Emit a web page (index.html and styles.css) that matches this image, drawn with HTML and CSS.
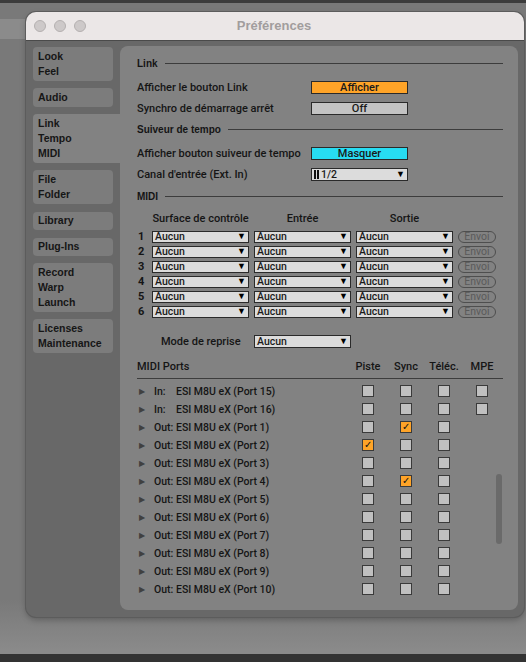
FILE: index.html
```html
<!DOCTYPE html>
<html lang="fr">
<head>
<meta charset="utf-8">
<title>Préférences</title>
<link rel="stylesheet" href="styles.css">
</head>
<body>
<div class="desktop">
  <div class="topstrip"></div>
  <div class="bgband"></div>
  <div class="window">
    <div class="titlebar">
      <div class="lights"><span class="light"></span><span class="light"></span><span class="light"></span></div>
      <div class="title">Préférences</div>
    </div>
    <div class="wbody">
      <div class="sidebar">
        <div class="tab tab2"><span>Look</span><span>Feel</span></div>
        <div class="tab tab1"><span>Audio</span></div>
        <div class="tab tab3 sel"><span>Link</span><span>Tempo</span><span>MIDI</span></div>
        <div class="tab tab2"><span>File</span><span>Folder</span></div>
        <div class="tab tab1"><span>Library</span></div>
        <div class="tab tab1"><span>Plug-Ins</span></div>
        <div class="tab tab3"><span>Record</span><span>Warp</span><span>Launch</span></div>
        <div class="tab tab2"><span>Licenses</span><span>Maintenance</span></div>
      </div>
      <div class="panel">
        <div class="sect s-link"><span>Link</span><i></i></div>
        <div class="row r1"><span class="lbl">Afficher le bouton Link</span><span class="btn orange">Afficher</span></div>
        <div class="row r2"><span class="lbl">Synchro de démarrage arrêt</span><span class="btn gray">Off</span></div>
        <div class="sect s-tempo"><span>Suiveur de tempo</span><i></i></div>
        <div class="row r3"><span class="lbl">Afficher bouton suiveur de tempo</span><span class="btn cyan">Masquer</span></div>
        <div class="row r4"><span class="lbl">Canal d'entrée (Ext. In)</span><span class="dd"><span class="bars"></span>1/2<b>▼</b></span></div>
        <div class="sect s-midi"><span>MIDI</span><i></i></div>
        <div class="mgrid">
          <span></span><span class="ch">Surface de contrôle</span><span class="ch">Entrée</span><span class="ch">Sortie</span><span></span>
          <span class="num">1</span><span class="dd">Aucun<b>▼</b></span><span class="dd">Aucun<b>▼</b></span><span class="dd">Aucun<b>▼</b></span><span class="pill">Envoi</span>
          <span class="num">2</span><span class="dd">Aucun<b>▼</b></span><span class="dd">Aucun<b>▼</b></span><span class="dd">Aucun<b>▼</b></span><span class="pill">Envoi</span>
          <span class="num">3</span><span class="dd">Aucun<b>▼</b></span><span class="dd">Aucun<b>▼</b></span><span class="dd">Aucun<b>▼</b></span><span class="pill">Envoi</span>
          <span class="num">4</span><span class="dd">Aucun<b>▼</b></span><span class="dd">Aucun<b>▼</b></span><span class="dd">Aucun<b>▼</b></span><span class="pill">Envoi</span>
          <span class="num">5</span><span class="dd">Aucun<b>▼</b></span><span class="dd">Aucun<b>▼</b></span><span class="dd">Aucun<b>▼</b></span><span class="pill">Envoi</span>
          <span class="num">6</span><span class="dd">Aucun<b>▼</b></span><span class="dd">Aucun<b>▼</b></span><span class="dd">Aucun<b>▼</b></span><span class="pill">Envoi</span>
        </div>
        <div class="mode"><span class="lbl">Mode de reprise</span><span class="dd">Aucun<b>▼</b></span></div>
        <div class="phead"><span class="ptitle">MIDI Ports</span><span>Piste</span><span>Sync</span><span>Téléc.</span><span>MPE</span></div>
        <div class="ports">
          <div class="plist">
            <div class="prow"><span class="pname"><span class="tri">▶</span><span class="io">In:</span>ESI M8U eX (Port 15)</span><span class="cb"></span><span class="cb"></span><span class="cb"></span><span class="cb"></span></div>
            <div class="prow"><span class="pname"><span class="tri">▶</span><span class="io">In:</span>ESI M8U eX (Port 16)</span><span class="cb"></span><span class="cb"></span><span class="cb"></span><span class="cb"></span></div>
            <div class="prow"><span class="pname"><span class="tri">▶</span>Out: ESI M8U eX (Port 1)</span><span class="cb"></span><span class="cb on">✓</span><span class="cb"></span><span></span></div>
            <div class="prow"><span class="pname"><span class="tri">▶</span>Out: ESI M8U eX (Port 2)</span><span class="cb on">✓</span><span class="cb"></span><span class="cb"></span><span></span></div>
            <div class="prow"><span class="pname"><span class="tri">▶</span>Out: ESI M8U eX (Port 3)</span><span class="cb"></span><span class="cb"></span><span class="cb"></span><span></span></div>
            <div class="prow"><span class="pname"><span class="tri">▶</span>Out: ESI M8U eX (Port 4)</span><span class="cb"></span><span class="cb on">✓</span><span class="cb"></span><span></span></div>
            <div class="prow"><span class="pname"><span class="tri">▶</span>Out: ESI M8U eX (Port 5)</span><span class="cb"></span><span class="cb"></span><span class="cb"></span><span></span></div>
            <div class="prow"><span class="pname"><span class="tri">▶</span>Out: ESI M8U eX (Port 6)</span><span class="cb"></span><span class="cb"></span><span class="cb"></span><span></span></div>
            <div class="prow"><span class="pname"><span class="tri">▶</span>Out: ESI M8U eX (Port 7)</span><span class="cb"></span><span class="cb"></span><span class="cb"></span><span></span></div>
            <div class="prow"><span class="pname"><span class="tri">▶</span>Out: ESI M8U eX (Port 8)</span><span class="cb"></span><span class="cb"></span><span class="cb"></span><span></span></div>
            <div class="prow"><span class="pname"><span class="tri">▶</span>Out: ESI M8U eX (Port 9)</span><span class="cb"></span><span class="cb"></span><span class="cb"></span><span></span></div>
            <div class="prow"><span class="pname"><span class="tri">▶</span>Out: ESI M8U eX (Port 10)</span><span class="cb"></span><span class="cb"></span><span class="cb"></span><span></span></div>
          </div>
          <div class="scroll"></div>
        </div>
      </div>
    </div>
  </div>
  <div class="bottombar"></div>
</div>
</body>
</html>
```
FILE: styles.css
```css
* { box-sizing: border-box; }
html, body { margin: 0; padding: 0; }
body {
  font-family: "Liberation Sans", Arial, sans-serif;
  background: #7a7a7a;
}
.desktop {
  position: relative;
  width: 526px;
  height: 662px;
  overflow: hidden;
  background: linear-gradient(#797979 0, #797979 600px, #8a8a8a 650px);
  display: flex;
  flex-direction: column;
}
.topstrip { height: 3px; background: #3c3c3c; flex: none; }
.bgband {
  position: absolute;
  left: 0; top: 19px;
  width: 30px; height: 20px;
  background: #8b8b8b;
}
.window {
  position: relative;
  margin: 9px 0 0 26px;
  width: 498px;
  height: 605px;
  border-radius: 10px;
  background: #686868;
  box-shadow: 0 0 0 1px #5c5c5c, 0 3px 6px rgba(0,0,0,0.25);
  display: flex;
  flex-direction: column;
  overflow: hidden;
  flex: none;
}
.titlebar {
  height: 29px;
  background: #ebe7e7;
  border-bottom: 1px solid #4a4a4a;
  display: flex;
  align-items: center;
  position: relative;
  flex: none;
}
.lights { display: flex; gap: 8px; margin-left: 8px; }
.light {
  width: 12px; height: 12px; border-radius: 50%;
  background: #cdc9c9;
  border: 1px solid #b4b0b0;
}
.title {
  position: absolute;
  left: 0; right: 0; top: 6px;
  text-align: center;
  font-weight: bold;
  font-size: 13px;
  color: #a19d9d;
  padding-right: 2px;
}
.wbody {
  flex: 1;
  display: flex;
  padding: 5px 6px 7px 7px;
}
.sidebar {
  width: 87px;
  flex: none;
  display: flex;
  flex-direction: column;
  padding-top: 1px;
}
.tab {
  width: 80px;
  background: #7c7c7c;
  border-radius: 4px;
  display: flex;
  flex-direction: column;
  padding: 2px 0 0 5px;
  font-weight: bold;
  font-size: 10.5px;
  color: #161616;
  margin-bottom: 7.4px;
  flex: none;
}
.tab span { height: 15px; line-height: 15px; }
.tab1 { height: 18.5px; padding-top: 1.5px; }
.tab2 { height: 34px; }
.tab3 { height: 48.6px; }
.tab.sel {
  width: 87px;
  background: #828282;
  border-radius: 4px 0 0 4px;
}
.panel {
  flex: 1;
  background: #828282;
  border-radius: 8px;
  padding: 8px 15px 0 17px;
  color: #151515;
  font-family: Roboto, "Liberation Sans", sans-serif;
  font-weight: 500;
  font-size: 11px;
  display: flex;
  flex-direction: column;
  overflow: hidden;
}
.sect {
  display: flex;
  align-items: center;
  height: 18px;
  font-family: "Liberation Sans", Arial, sans-serif;
  font-weight: bold;
  font-size: 10px;
}
.sect i {
  flex: 1;
  height: 1px;
  background: #3c3c3c;
  margin-left: 7px;
}
.s-link { margin-bottom: 5px; }
.s-tempo { margin-top: 2px; margin-bottom: 5px; }
.s-midi { margin-top: 3px; }
.row {
  display: flex;
  align-items: center;
  height: 20px;
}
.r2 { margin-top: 1px; }
.r4 { margin-top: 1px; }
.lbl { width: 174px; flex: none; }
.btn, .dd {
  width: 97px;
  height: 13px;
  border: 1px solid #2a2a2a;
  font-size: 11px;
  line-height: 11px;
  color: #1a1a1a;
}
.btn { text-align: center; }
.orange { background: #ffa428; }
.gray { background: #c3c3c3; }
.cyan { background: #27dcf2; }
.dd {
  background: #dcdcdc;
  display: flex;
  align-items: center;
  padding-left: 2px;
  position: relative;
  font-size: 10.5px;
}
.dd b {
  margin-left: auto;
  margin-right: 2px;
  font-size: 9px;
  color: #000;
}
.bars {
  width: 5px; height: 9px;
  border-left: 2px solid #111;
  border-right: 2px solid #111;
  margin-right: 2px;
}
.mgrid {
  display: grid;
  grid-template-columns: 10px 97px 97px 97px 38px;
  column-gap: 5px;
  grid-auto-rows: 15px;
  grid-template-rows: 22px;
  align-items: center;
  margin-top: 2px;
}
.ch { text-align: center; }
.num { font-weight: bold; padding-left: 1px; }
.mgrid .dd { height: 12px; }
.pill {
  height: 12px;
  border: 1px solid #4e4e4e;
  border-radius: 6px;
  color: #5a5a5a;
  text-align: center;
  line-height: 10px;
  font-size: 10.5px;
  font-weight: 400;
}
.mode {
  display: flex;
  align-items: center;
  height: 14px;
  margin-top: 15px;
}
.mode .lbl { width: 117px; padding-left: 24px; }
.phead {
  display: grid;
  grid-template-columns: 212px 38px 38px 38px 38px;
  align-items: center;
  height: 24px;
  margin-top: 7px;
  border-bottom: 1px solid #3c3c3c;
}
.phead span { text-align: center; }
.phead .ptitle { text-align: left; }
.ports {
  position: relative;
  flex: 1;
  overflow: hidden;
  padding-top: 3px;
}
.prow {
  display: grid;
  grid-template-columns: 212px 38px 38px 38px 38px;
  align-items: center;
  height: 18px;
  font-size: 10.5px;
}
.pname { display: flex; align-items: center; }
.tri { font-size: 8px; color: #404040; width: 17px; padding-left: 2px; }
.io { width: 22px; }
.cb {
  justify-self: center;
  width: 12px; height: 12px;
  background: #c0c0c0;
  border: 1px solid #3a3a3a;
  font-size: 10px;
  line-height: 10px;
  text-align: center;
  color: #111;
}
.cb.on { background: #ffa428; }
.scroll {
  position: absolute;
  right: 1px;
  top: 95px;
  width: 6px;
  height: 70px;
  border-radius: 3px;
  background: #6a6a6a;
}
.bottombar {
  margin-top: auto;
  height: 8px;
  background: #333;
  flex: none;
}
```
